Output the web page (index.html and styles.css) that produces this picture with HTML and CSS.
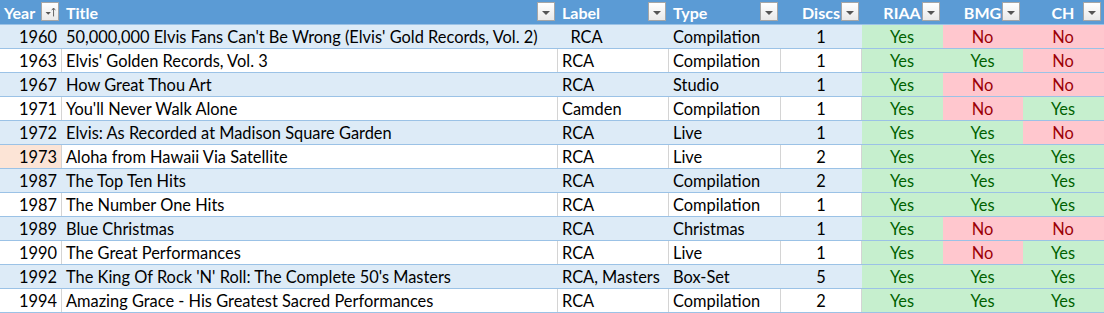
FILE: index.html
```html
<!DOCTYPE html>
<html>
<head>
<meta charset="utf-8">
<link rel="stylesheet" href="styles.css">
</head>
<body>
<div class="sheet">
  <div class="row head">
    <div class="c left">Year<span class="dd sort"><svg width="18" height="18" viewBox="0 0 18 18"><path d="M4 9h6l-3 3z" fill="#555"/><path d="M13 14V5M11 7l2-2.5L15 7" stroke="#555" stroke-width="1" fill="none"/></svg></span></div>
    <div class="c left">Title<span class="dd"><i></i></span></div>
    <div class="c left">Label<span class="dd"><i></i></span></div>
    <div class="c left">Type<span class="dd"><i></i></span></div>
    <div class="c ctr">Discs<span class="dd"><i></i></span></div>
    <div class="c ctr">RIAA<span class="dd"><i></i></span></div>
    <div class="c ctr">BMG<span class="dd"><i></i></span></div>
    <div class="c ctr">CH<span class="dd"><i></i></span></div>
  </div>

  <div class="row band">
    <div class="c num">1960</div><div class="c left">50,000,000 Elvis Fans Can't Be Wrong (Elvis' Gold Records, Vol. 2)</div><div class="c left">&nbsp;&nbsp;RCA</div><div class="c left">Compilation</div><div class="c ctr">1</div><div class="c ctr yes">Yes</div><div class="c ctr no">No</div><div class="c ctr no">No</div>
  </div>
  <div class="row">
    <div class="c num">1963</div><div class="c left">Elvis' Golden Records, Vol. 3</div><div class="c left">RCA</div><div class="c left">Compilation</div><div class="c ctr">1</div><div class="c ctr yes">Yes</div><div class="c ctr yes">Yes</div><div class="c ctr no">No</div>
  </div>
  <div class="row band">
    <div class="c num">1967</div><div class="c left">How Great Thou Art</div><div class="c left">RCA</div><div class="c left">Studio</div><div class="c ctr">1</div><div class="c ctr yes">Yes</div><div class="c ctr no">No</div><div class="c ctr no">No</div>
  </div>
  <div class="row">
    <div class="c num">1971</div><div class="c left">You'll Never Walk Alone</div><div class="c left">Camden</div><div class="c left">Compilation</div><div class="c ctr">1</div><div class="c ctr yes">Yes</div><div class="c ctr no">No</div><div class="c ctr yes">Yes</div>
  </div>
  <div class="row band">
    <div class="c num">1972</div><div class="c left">Elvis: As Recorded at Madison Square Garden</div><div class="c left">RCA</div><div class="c left">Live</div><div class="c ctr">1</div><div class="c ctr yes">Yes</div><div class="c ctr yes">Yes</div><div class="c ctr no">No</div>
  </div>
  <div class="row">
    <div class="c num sel">1973</div><div class="c left">Aloha from Hawaii Via Satellite</div><div class="c left">RCA</div><div class="c left">Live</div><div class="c ctr">2</div><div class="c ctr yes">Yes</div><div class="c ctr yes">Yes</div><div class="c ctr yes">Yes</div>
  </div>
  <div class="row band">
    <div class="c num">1987</div><div class="c left">The Top Ten Hits</div><div class="c left">RCA</div><div class="c left">Compilation</div><div class="c ctr">2</div><div class="c ctr yes">Yes</div><div class="c ctr yes">Yes</div><div class="c ctr yes">Yes</div>
  </div>
  <div class="row">
    <div class="c num">1987</div><div class="c left">The Number One Hits</div><div class="c left">RCA</div><div class="c left">Compilation</div><div class="c ctr">1</div><div class="c ctr yes">Yes</div><div class="c ctr yes">Yes</div><div class="c ctr yes">Yes</div>
  </div>
  <div class="row band">
    <div class="c num">1989</div><div class="c left">Blue Christmas</div><div class="c left">RCA</div><div class="c left">Christmas</div><div class="c ctr">1</div><div class="c ctr yes">Yes</div><div class="c ctr no">No</div><div class="c ctr no">No</div>
  </div>
  <div class="row">
    <div class="c num">1990</div><div class="c left">The Great Performances</div><div class="c left">RCA</div><div class="c left">Live</div><div class="c ctr">1</div><div class="c ctr yes">Yes</div><div class="c ctr no">No</div><div class="c ctr yes">Yes</div>
  </div>
  <div class="row band">
    <div class="c num">1992</div><div class="c left">The King Of Rock 'N' Roll: The Complete 50's Masters</div><div class="c left">RCA, Masters</div><div class="c left">Box-Set</div><div class="c ctr">5</div><div class="c ctr yes">Yes</div><div class="c ctr yes">Yes</div><div class="c ctr yes">Yes</div>
  </div>
  <div class="row">
    <div class="c num">1994</div><div class="c left">Amazing Grace - His Greatest Sacred Performances</div><div class="c left">RCA</div><div class="c left">Compilation</div><div class="c ctr">2</div><div class="c ctr yes">Yes</div><div class="c ctr yes">Yes</div><div class="c ctr yes">Yes</div>
  </div>
</div>
</body>
</html>
```

FILE: styles.css
```css
html, body {
  margin: 0;
  padding: 0;
  background: #ffffff;
}
.sheet {
  width: 1104px;
  font-family: Lato, "Liberation Sans", sans-serif;
  font-size: 16.4px;
  color: #000;
}
.row {
  display: grid;
  grid-template-columns: 62px 496px 111px 112px 81px 81px 80px 81px;
  height: 24px;
  border-bottom: 1px solid #9bc2e6;
  box-sizing: border-box;
  background: #ffffff;
}
.row.head {
  height: 25px;
  background: #5b9bd5;
  color: #ffffff;
  font-weight: bold;
  font-size: 16px;
}
.row.band {
  background: #ddebf7;
}
.c {
  position: relative;
  box-sizing: border-box;
  line-height: 23px;
  padding: 0 4px;
  white-space: nowrap;
  overflow: hidden;
  border-right: 1px solid #d4d4d4;
}
.head .c, .band .c {
  border-right-color: transparent;
}
.head .c {
  line-height: 25px;
  overflow: visible;
}
.left { text-align: left; }
.ctr { text-align: center; }
.num { text-align: right; }
.sel { background: #fce4d6; }
.yes {
  background: #c6efce;
  color: #006100;
  border-right-color: transparent;
}
.no {
  background: #ffc7ce;
  color: #9c0006;
  border-right-color: transparent;
}
.dd {
  position: absolute;
  right: 2px;
  top: 2px;
  width: 18px;
  height: 19px;
  box-sizing: border-box;
  border: 1px solid #a6a6a6;
  background: linear-gradient(#ffffff, #e9e9e9);
  display: flex;
  align-items: center;
  justify-content: center;
}
.dd i {
  display: block;
  width: 0;
  height: 0;
  border-left: 4px solid transparent;
  border-right: 4px solid transparent;
  border-top: 4px solid #555555;
  margin-top: 2px;
}
.dd.sort svg {
  display: block;
}
```
